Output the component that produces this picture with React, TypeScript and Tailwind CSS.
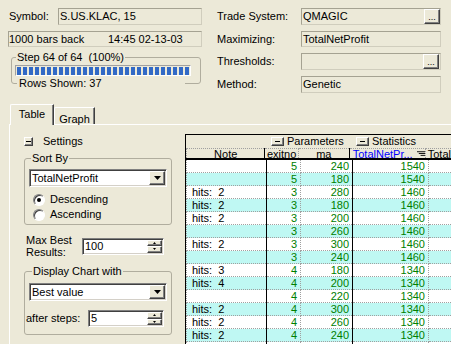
import React from "react"

// classic 3D edges
const sunken =
  "border border-t-[#808080] border-l-[#808080] border-b-white border-r-white shadow-[inset_1px_1px_0_#404040,inset_-1px_-1px_0_#d4d0c8]"
const raised =
  "border border-t-white border-l-white border-b-[#404040] border-r-[#404040] shadow-[inset_-1px_-1px_0_#808080] bg-[#ece9d8]"
const flat = "border border-t-[#a5a292] border-l-[#a5a292] border-b-[#d0cdbd] border-r-[#d0cdbd]"
const group = "border border-[#b0ad9e] rounded-[3px]"

const rows: [string, string, string, string][] = [
  ["", "5", "240", "1540"],
  ["", "5", "180", "1540"],
  ["hits:  2", "3", "280", "1460"],
  ["hits:  2", "3", "180", "1460"],
  ["hits:  2", "3", "200", "1460"],
  ["", "3", "260", "1460"],
  ["hits:  2", "3", "300", "1460"],
  ["", "3", "240", "1460"],
  ["hits:  3", "4", "180", "1340"],
  ["hits:  4", "4", "200", "1340"],
  ["", "4", "220", "1340"],
  ["hits:  2", "4", "300", "1340"],
  ["hits:  2", "4", "260", "1340"],
  ["hits:  2", "4", "240", "1340"],
  ["", "", "", ""],
]

const DotsBtn = () => (
  <div className={`w-[16px] h-full ml-auto ${raised} flex items-end justify-center pb-[2px] text-[9px] leading-[7px]`}>
    ...
  </div>
)

const Minus = ({ className = "" }: { className?: string }) => (
  <div className={`${raised} flex items-center justify-center ${className}`}>
    <div className="w-[5px] h-px bg-black" />
  </div>
)

const Combo = ({ value, className = "" }: { value: string; className?: string }) => (
  <div className={`flex h-[18px] w-[138px] bg-white ${sunken} ${className}`}>
    <span className="flex-1 pl-[2px] leading-[16px]">{value}</span>
    <div className={`w-[16px] my-[1px] mr-[1px] ${raised} flex items-center justify-center`}>
      <svg width="7" height="4" viewBox="0 0 7 4">
        <path d="M0 0h7L3.5 4z" fill="#000" />
      </svg>
    </div>
  </div>
)

const Spin = ({ value, className = "" }: { value: string; className?: string }) => (
  <div className={`flex h-[17px] bg-white ${sunken} ${className}`}>
    <span className="flex-1 pl-[2px] leading-[15px]">{value}</span>
    <div className="w-[15px] my-[1px] mr-[1px] flex flex-col">
      <div className={`flex-1 ${raised} flex items-center justify-center`}>
        <svg width="3" height="2" viewBox="0 0 3 2">
          <path d="M1.5 0L3 2H0z" fill="#000" />
        </svg>
      </div>
      <div className={`flex-1 ${raised} flex items-center justify-center`}>
        <svg width="3" height="2" viewBox="0 0 3 2">
          <path d="M0 0h3L1.5 2z" fill="#000" />
        </svg>
      </div>
    </div>
  </div>
)

const Radio = ({ checked, label }: { checked?: boolean; label: string }) => (
  <div className="flex items-center h-[15px]">
    <div className="ml-[8px] w-[12px] h-[12px] rounded-full border border-t-[#808080] border-l-[#808080] border-b-white border-r-white bg-white shadow-[inset_1px_1px_0_#404040] flex items-center justify-center">
      {checked && <div className="w-[4px] h-[4px] rounded-full bg-black" />}
    </div>
    <span className="ml-[5px]">{label}</span>
  </div>
)

function TopLeft() {
  return (
    <div className="w-[210px] shrink-0 pl-[8px] pt-[8px]">
      <div className="flex items-center">
        <span className="w-[50px] pl-[1px]">Symbol:</span>
        <div className={`w-[144px] h-[17px] ${flat} flex items-center pl-[1px]`}>S.US.KLAC, 15</div>
      </div>
      <div className={`mt-[6px] w-[194px] h-[16px] ${flat} flex items-center whitespace-pre`}>
        <span className="w-[99px]">1000 bars back</span>
        <span>14:45 02-13-03</span>
      </div>
      <div className={`mt-[10px] ml-[3px] w-[190px] h-[27px] ${group}`}>
        <div className="-mt-[7px] ml-[4px] w-fit px-[1px] bg-[#ece9d8] whitespace-pre">Step 64 of 64  (100%)</div>
        <div className="mt-[1px] ml-[3px] w-[176px] h-[11px] border border-t-[#a0a0a0] border-l-[#a0a0a0] border-b-white border-r-white px-[1px] pt-[1px] flex gap-[2px]">
          {[...Array(29)].map((_, i) => (
            <div key={i} className="w-[4px] h-[8px] bg-[#3169c6] shrink-0" />
          ))}
        </div>
        <div className="mt-[1px] -mb-[7px] ml-[5px] w-[168px] h-[13px] pl-[2px] bg-[#ece9d8]">Rows Shown: 37</div>
      </div>
    </div>
  )
}

function TopRight() {
  return (
    <div className="flex-1 pl-[7px] pt-[8px]">
      <div className="flex items-center h-[17px]">
        <span className="w-[84px]">Trade System:</span>
        <div className={`w-[140px] h-[17px] ${flat} flex items-center pl-[1px]`}>
          QMAGIC
          <DotsBtn />
        </div>
      </div>
      <div className="mt-[6px] flex items-center h-[16px]">
        <span className="w-[84px]">Maximizing:</span>
        <div className={`w-[140px] h-[16px] ${flat} flex items-center pl-[1px]`}>TotalNetProfit</div>
      </div>
      <div className="mt-[6px] flex items-center h-[17px]">
        <span className="w-[84px]">Thresholds:</span>
        <div className={`w-[140px] h-[17px] ${flat} flex items-center pr-[1px]`}>
          <DotsBtn />
        </div>
      </div>
      <div className="mt-[6px] flex items-center h-[17px]">
        <span className="w-[84px]">Method:</span>
        <div className={`w-[140px] h-[17px] ${flat} flex items-center pl-[1px]`}>Genetic</div>
      </div>
    </div>
  )
}

function LeftPanel() {
  return (
    <div className="w-[175px] shrink-0 pl-[14px] pt-[12px]">
      <div className="flex items-center h-[9px]">
        <Minus className="w-[9px] h-[9px]" />
        <span className="ml-[10px]">Settings</span>
      </div>

      <div className={`mt-[12px] w-[148px] h-[67px] ${group}`}>
        <div className="-mt-[7px] ml-[6px] w-fit px-[1px] bg-[#ece9d8]">Sort By</div>
        <Combo value="TotalNetProfit" className="mt-[4px] ml-[4px]" />
        <div className="mt-[5px]">
          <Radio checked label="Descending" />
          <Radio label="Ascending" />
        </div>
      </div>

      <div className="mt-[9px] flex items-center">
        <div className="ml-[2px] w-[56px] leading-[12px]">
          Max Best
          <br />
          Results:
        </div>
        <Spin value="100" className="w-[82px]" />
      </div>

      <div className={`mt-[13px] w-[148px] h-[64px] ${group}`}>
        <div className="-mt-[7px] ml-[7px] w-fit px-[1px] bg-[#ece9d8]">Display Chart with</div>
        <Combo value="Best value" className="mt-[5px] ml-[4px]" />
        <div className="mt-[9px] flex items-center">
          <span className="ml-[1px] w-[62px]">after steps:</span>
          <Spin value="5" className="w-[76px]" />
        </div>
      </div>
    </div>
  )
}

const dot = "border-dotted border-[#a0a0a0]"

function Grid() {
  return (
    <div className="mt-[9px] flex-1 border-l border-t border-black bg-white overflow-hidden">
      <div className="h-[13px] bg-[#ece9d8] flex items-center whitespace-nowrap">
        <div className="ml-[85px] w-[85px] flex items-center">
          <Minus className="w-[13px] h-[9px]" />
          <span className="ml-[3px]">Parameters</span>
        </div>
        <div className="flex items-center">
          <Minus className="w-[13px] h-[9px]" />
          <span className="ml-[3px]">Statistics</span>
        </div>
      </div>

      <div className="h-[12px] flex bg-[#ece9d8] border-b-2 border-black leading-[10px] whitespace-nowrap">
        <div className={`w-[80px] border-l border-t ${dot} text-center`}>Note</div>
        <div className="w-px bg-black" />
        <div className={`w-[34px] border-t border-r ${dot} text-center`}>exitno</div>
        <div className={`w-[51px] border-t ${dot} text-center`}>ma</div>
        <div className="w-px bg-black" />
        <div className={`w-[76px] border-t border-r ${dot} flex items-center pl-[3px] text-[#0000ff]`}>
          <span>TotalNetPr...</span>
          <svg width="9" height="6" viewBox="0 0 9 6" className="ml-[4px] mt-[1px]">
            <rect x="0" y="0" width="9" height="1" fill="#000" />
            <rect x="2" y="2" width="7" height="1" fill="#000" />
            <rect x="4" y="4" width="5" height="1" fill="#000" />
          </svg>
        </div>
        <div className={`flex-1 border-t ${dot} pl-[2px]`}>Total</div>
      </div>

      {rows.map(([note, ex, ma, tnp], i) => (
        <div key={i} className={`h-[13px] flex leading-[12px] whitespace-pre ${i % 2 ? "bg-[#bff8f3]" : "bg-white"}`}>
          <div className={`w-[80px] border-l border-b ${dot} pl-[5px]`}>{note}</div>
          <div className="w-px bg-black" />
          <div className={`w-[34px] border-b border-r ${dot} text-right pr-[3px] text-[#008000]`}>{ex}</div>
          <div className={`w-[51px] border-b ${dot} text-right pr-[3px] text-[#008000]`}>{ma}</div>
          <div className="w-px bg-black" />
          <div className={`w-[76px] border-b border-r ${dot} text-right pr-[3px] text-[#008000]`}>{tnp}</div>
          <div className={`flex-1 border-b ${dot}`} />
        </div>
      ))}
    </div>
  )
}

export default function App() {
  return (
    <div className="w-[451px] h-[344px] overflow-hidden bg-[#ece9d8] text-[11px] leading-[13px] text-black font-['Liberation_Sans',Arial,sans-serif]">
      <div className="flex h-[104px]">
        <TopLeft />
        <TopRight />
      </div>

      <div className="flex items-end h-[20px] pl-[10px]">
        <div className="relative -mb-[1px] w-[44px] h-[21px] bg-[#ece9d8] border-t border-l border-r border-t-white border-l-white border-r-[#404040] rounded-tl-[2px] shadow-[inset_-1px_0_0_#808080] flex justify-center pt-[3px]">
          Table
        </div>
        <div className="w-[41px] h-[17px] bg-[#ece9d8] border-t border-l border-r border-t-white border-l-white border-r-[#404040] rounded-tl-[2px] shadow-[inset_-1px_0_0_#808080] flex justify-center pt-[5px]">
          Graph
        </div>
      </div>

      <div className="ml-[9px] h-[220px] flex border-l border-t border-white">
        <LeftPanel />
        <Grid />
      </div>
    </div>
  )
}
